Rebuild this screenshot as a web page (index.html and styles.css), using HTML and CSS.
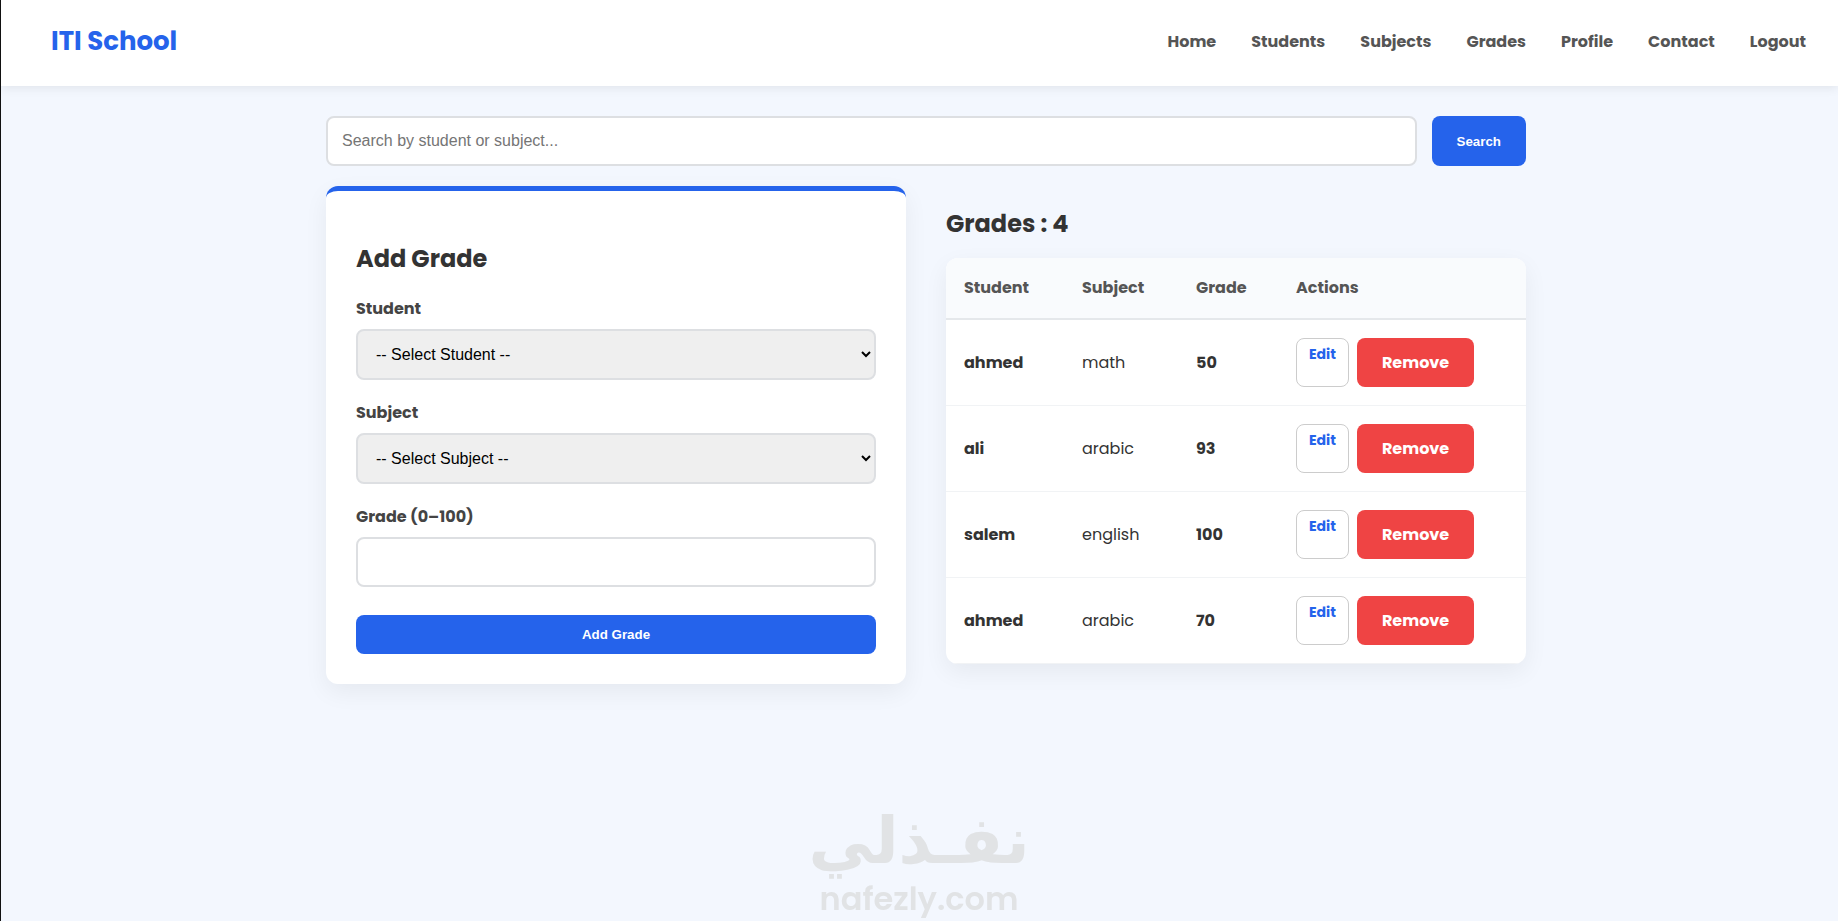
FILE: index.html
```html
<!DOCTYPE html>
<html lang="en">
<head>
    <meta charset="UTF-8">
    <meta name="viewport" content="width=device-width, initial-scale=1.0">
    <title>ITI School - Grades</title>
    <link rel="stylesheet" href="styles.css">
</head>
<body>
    <header class="navbar">
        <a href="#" class="logo">ITI School</a>
        <nav class="nav-links">
            <a href="#">Home</a>
            <a href="#">Students</a>
            <a href="#">Subjects</a>
            <a href="#">Grades</a>
            <a href="#">Profile</a>
            <a href="#">Contact</a>
            <a href="#">Logout</a>
        </nav>
    </header>

    <main class="page">
        <div class="container">
            <form class="search-bar">
                <input type="text" name="search" aria-label="Search" placeholder="Search by student or subject...">
                <button type="submit" class="btn">Search</button>
            </form>

            <div class="grid">
                <section class="card">
                    <h2>Add Grade</h2>
                    <form>
                        <div class="form-group">
                            <label for="student">Student</label>
                            <select id="student">
                                <option>-- Select Student --</option>
                                <option>ahmed</option>
                                <option>ali</option>
                                <option>salem</option>
                            </select>
                        </div>
                        <div class="form-group">
                            <label for="subject">Subject</label>
                            <select id="subject">
                                <option>-- Select Subject --</option>
                                <option>math</option>
                                <option>arabic</option>
                                <option>english</option>
                            </select>
                        </div>
                        <div class="form-group">
                            <label for="grade">Grade (0–100)</label>
                            <input type="text" id="grade" inputmode="numeric">
                        </div>
                        <button type="submit" class="btn btn-block">Add Grade</button>
                    </form>
                </section>

                <section class="grades">
                    <h2>Grades : 4</h2>
                    <table>
                        <thead>
                            <tr>
                                <th class="col-student">Student</th>
                                <th class="col-subject">Subject</th>
                                <th class="col-grade">Grade</th>
                                <th>Actions</th>
                            </tr>
                        </thead>
                        <tbody>
                            <tr>
                                <td><strong>ahmed</strong></td>
                                <td>math</td>
                                <td><strong>50</strong></td>
                                <td>
                                    <div class="actions">
                                        <a href="#" class="edit-btn">Edit</a>
                                        <button type="button" class="remove-btn">Remove</button>
                                    </div>
                                </td>
                            </tr>
                            <tr>
                                <td><strong>ali</strong></td>
                                <td>arabic</td>
                                <td><strong>93</strong></td>
                                <td>
                                    <div class="actions">
                                        <a href="#" class="edit-btn">Edit</a>
                                        <button type="button" class="remove-btn">Remove</button>
                                    </div>
                                </td>
                            </tr>
                            <tr>
                                <td><strong>salem</strong></td>
                                <td>english</td>
                                <td><strong>100</strong></td>
                                <td>
                                    <div class="actions">
                                        <a href="#" class="edit-btn">Edit</a>
                                        <button type="button" class="remove-btn">Remove</button>
                                    </div>
                                </td>
                            </tr>
                            <tr>
                                <td><strong>ahmed</strong></td>
                                <td>arabic</td>
                                <td><strong>70</strong></td>
                                <td>
                                    <div class="actions">
                                        <a href="#" class="edit-btn">Edit</a>
                                        <button type="button" class="remove-btn">Remove</button>
                                    </div>
                                </td>
                            </tr>
                        </tbody>
                    </table>
                </section>
            </div>
        </div>
    </main>

    <div class="watermark">
        <span class="watermark-ar" lang="ar" dir="rtl">نفـذلي</span>
        <span class="watermark-en">nafezly.com</span>
    </div>
</body>
</html>
```
FILE: styles.css
```css
:root {
    --primary: #2563eb;
    --danger: #ef4444;
    --bg: #f3f7fe;
    --border: #dddfe2;
    --text: #333;
}

* {
    margin: 0;
    padding: 0;
    box-sizing: border-box;
}

body {
    min-height: 100vh;
    background: var(--bg);
    border-left: 1px solid #111;
    color: var(--text);
    font-family: 'Poppins', 'Inter', sans-serif;
    font-size: 16px;
    line-height: 24px;
}

/* Navbar */
.navbar {
    display: flex;
    justify-content: space-between;
    align-items: center;
    min-height: 86px;
    padding: 0 32px 3px 50px;
    background: #fff;
    box-shadow: 0 2px 10px rgba(0, 0, 0, 0.08);
}

.logo {
    margin-bottom: 2px;
    color: var(--primary);
    font-size: 26px;
    font-weight: 700;
    line-height: 40px;
    text-decoration: none;
}

.nav-links {
    display: flex;
    gap: 35px;
}

.nav-links a {
    color: #555;
    font-weight: 700;
    text-decoration: none;
}

.nav-links a:hover {
    color: var(--primary);
}

/* Layout */
.page {
    padding: 30px 0 30px 13px;
}

.container {
    max-width: 1200px;
    margin: 0 auto;
}

.search-bar {
    display: flex;
    gap: 15px;
    margin-bottom: 20px;
}

.grid {
    display: grid;
    grid-template-columns: 1fr 1fr;
    align-items: start;
    gap: 40px;
}

h2 {
    font-size: 24px;
    font-weight: 700;
    line-height: 36px;
}

/* Form */
input,
select {
    width: 100%;
    height: 50px;
    padding: 0 14px;
    border: 2px solid var(--border);
    border-radius: 8px;
    font-family: 'Liberation Sans', Arial, sans-serif;
    font-size: 16px;
}

input {
    background: #fff;
}

select {
    height: 51px;
    background: #efefef;
    color: #000;
}

input:focus,
select:focus {
    border-color: var(--primary);
    outline: none;
}

.btn {
    padding: 12px 25px;
    background: var(--primary);
    color: #fff;
    border: none;
    border-radius: 8px;
    font-family: 'Liberation Sans', Arial, sans-serif;
    font-weight: 700;
    cursor: pointer;
}

.btn-block {
    width: 100%;
    margin-top: 7px;
}

.card {
    padding: 50px 30px 30px;
    background: #fff;
    border-top: 5px solid var(--primary);
    border-radius: 12px;
    box-shadow: 0 8px 25px rgba(0, 0, 0, 0.06);
}

.card h2 {
    margin-bottom: 20px;
}

.form-group {
    margin-bottom: 21px;
}

.form-group label {
    display: block;
    margin-bottom: 8px;
    color: #444;
    font-weight: 700;
}

.form-group select,
.form-group input {
    display: block;
}

/* Grades table */
.grades {
    padding-top: 20px;
}

.grades h2 {
    margin-bottom: 16px;
}

table {
    width: 100%;
    background: #fff;
    border-collapse: separate;
    border-spacing: 0;
    border-radius: 12px;
    box-shadow: 0 8px 25px rgba(0, 0, 0, 0.06);
    overflow: hidden;
}

th,
td {
    padding: 18px;
    text-align: left;
}

th {
    background: #f9fbfd;
    border-bottom: 2px solid #e5e8eb;
    color: #555;
    font-weight: 700;
}

td {
    border-bottom: 1px solid #f1f3f5;
}

.col-student {
    width: 118px;
}

.col-subject {
    width: 114px;
}

.col-grade {
    width: 100px;
}

.actions {
    display: flex;
    gap: 8px;
}

.edit-btn {
    padding: 4px 12px;
    border: 1px solid #ccc;
    border-radius: 8px;
    color: var(--primary);
    font-size: 14px;
    font-weight: 700;
    line-height: 22px;
    text-decoration: none;
}

.remove-btn {
    min-height: 49px;
    padding: 12px 25px;
    background: var(--danger);
    color: #fff;
    border: none;
    border-radius: 8px;
    font: inherit;
    font-weight: 700;
    cursor: pointer;
}

/* Watermark */
.watermark {
    position: fixed;
    left: 0;
    right: 0;
    bottom: 0;
    display: flex;
    flex-direction: column;
    align-items: center;
    color: #e1e3e5;
    pointer-events: none;
}

.watermark-ar {
    font-family: 'DejaVu Sans', sans-serif;
    font-size: 65px;
    font-weight: 700;
    line-height: 80px;
}

.watermark-en {
    padding-bottom: 4px;
    font-size: 32px;
    font-weight: 600;
    line-height: 36px;
}
```
